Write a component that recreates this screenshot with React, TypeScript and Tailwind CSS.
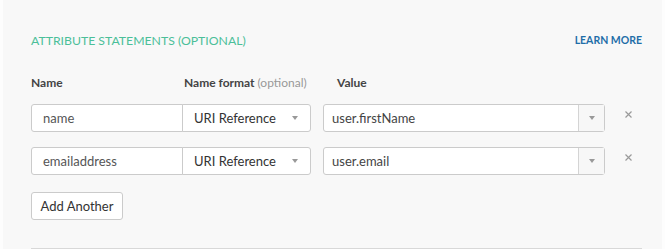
const font = { fontFamily: "Lato, 'Open Sans', sans-serif" };

function Caret() {
  return (
    <svg width="6" height="4" viewBox="0 0 6 4" className="text-[#999]">
      <path d="M0 0h6L3 4z" fill="currentColor" />
    </svg>
  );
}

function Row({ name, value }: { name: string; value: string }) {
  return (
    <div className="flex h-[28px] items-stretch">
      <div className="flex w-[152px] items-center rounded-l-[3px] border border-[#cbcbcb] bg-white px-[11px] text-[13px] text-[#555]">
        {name}
      </div>
      <div className="-ml-px flex w-[129px] items-center justify-between rounded-r-[3px] border border-[#cbcbcb] bg-white pl-[11px] pr-[12px] text-[13px] text-[#333]">
        <span>URI Reference</span>
        <Caret />
      </div>
      <div className="ml-[12px] flex w-[282px] rounded-[3px] border border-[#cbcbcb] bg-white">
        <div className="flex flex-1 items-center px-[8px] text-[13px] text-[#444]">{value}</div>
        <div className="flex w-[26px] items-center justify-center border-l border-[#d4d4d4] bg-[#f7f7f7]">
          <Caret />
        </div>
      </div>
      <svg width="7" height="7" viewBox="0 0 7 7" className="ml-[20px] mt-[7px] text-[#9a9a9a]">
        <path d="M0.5 0.5l6 6M6.5 0.5l-6 6" stroke="currentColor" strokeWidth="1.2" />
      </svg>
    </div>
  );
}

export default function App() {
  return (
    <div className="h-[249px] w-[665px] overflow-hidden bg-[#fdfdfd]" style={font}>
      <div className="mx-[3px] h-full bg-[#f8f8f8] pl-[28px] pr-[20px]">
        <div className="flex items-center justify-between pt-[32px]">
          <h2 className="text-[12.25px] uppercase text-[#4bbf99]">Attribute Statements (optional)</h2>
          <a className="text-[10.5px] font-bold uppercase text-[#1f6ea8]">Learn More</a>
        </div>
        <div className="mt-[24px] flex text-[12px] font-bold text-[#444]">
          <div className="w-[153px]">Name</div>
          <div className="w-[153px]">
            Name format <span className="font-normal text-[#999]">(optional)</span>
          </div>
          <div>Value</div>
        </div>
        <div className="mt-[12px] flex flex-col gap-[15px]">
          <Row name="name" value="user.firstName" />
          <Row name="emailaddress" value="user.email" />
        </div>
        <button className="mt-[17px] h-[28px] w-[92px] rounded-[3px] border border-[#cbcbcb] bg-white text-[13px] text-[#333]">
          Add Another
        </button>
        <div className="mt-[28px] border-t border-[#d8d8d8]" />
      </div>
    </div>
  );
}
